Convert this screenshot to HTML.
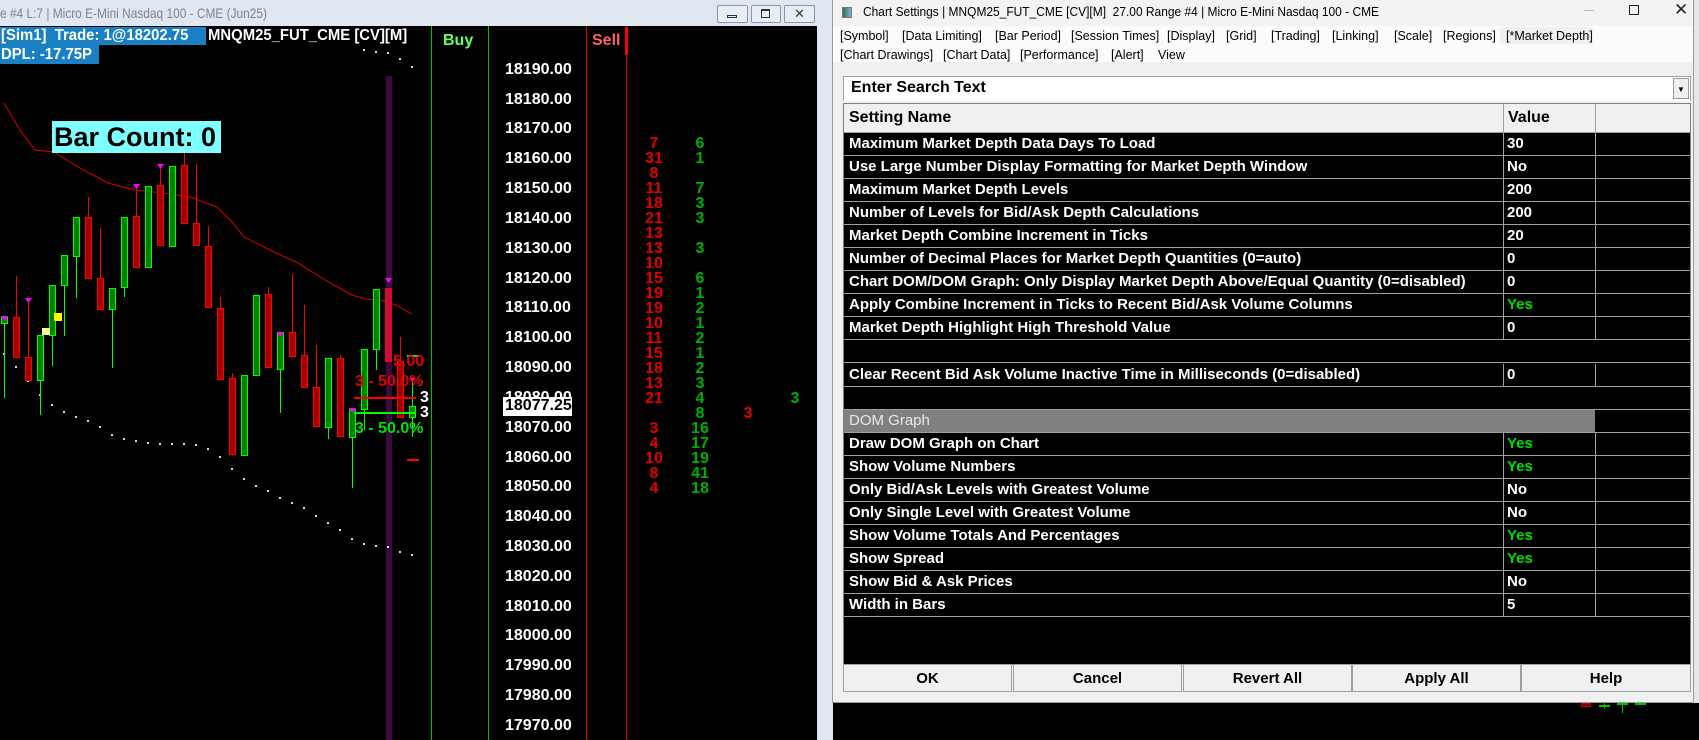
<!DOCTYPE html>
<html><head><meta charset="utf-8"><style>
*{margin:0;padding:0;box-sizing:border-box}
body{width:1699px;height:740px;overflow:hidden;background:#000;font-family:"Liberation Sans",Arial,sans-serif;position:relative}
.a{position:absolute;white-space:nowrap}
.b{font-weight:bold}
.px{position:absolute;left:505px;width:66px;text-align:left;color:#fff;font-weight:bold;font-size:16px;line-height:18px}
.r{position:absolute;color:#e00000;font-weight:bold;font-size:16px;width:30px;text-align:center;line-height:15px}
.g{position:absolute;color:#00b000;font-weight:bold;font-size:16px;width:30px;text-align:center;line-height:15px}
.tab{position:absolute;font-size:12.5px;color:#000;top:29px}
.tab2{top:48px}
.row{position:absolute;left:844px;width:846px;height:23px;border-bottom:1px solid #a0a0a0;color:#fff;font-weight:bold;font-size:15px;line-height:22px}
.row .n{position:absolute;left:5px}
.row .v{position:absolute;left:663px}
.row .c1{position:absolute;left:659px;top:0;bottom:0;border-left:1px solid #a0a0a0}
.row .c2{position:absolute;left:751px;top:0;bottom:0;border-left:1px solid #a0a0a0}
.y{color:#00e000}
.btn{position:absolute;top:664px;height:28px;width:169px;background:#f0f0f0;border:1px solid #a0a0a0;text-align:center;font-weight:bold;font-size:15px;line-height:27px;color:#000}
.hd{font-size:16px;color:#fff;line-height:18px;transform:scaleX(0.93);transform-origin:left}
</style></head><body>
<div class="a" style="left:0;top:0;width:832px;height:26px;background:#dfe8f1"></div>
<div class="a" style="left:0;top:5px;font-size:14px;color:#7a8590;transform:scaleX(0.85);transform-origin:left">e #4 L:7 | Micro E-Mini Nasdaq 100 - CME (Jun25)</div>
<div class="a" style="left:717px;top:5px;width:31px;height:18px;border:1px solid #8a96a4;border-radius:2px;background:#e8eef5"></div>
<div class="a" style="left:727px;top:15px;width:10px;height:3px;border:1px solid #333"></div>
<div class="a" style="left:751px;top:5px;width:30px;height:18px;border:1px solid #8a96a4;border-radius:2px;background:#e8eef5"></div>
<div class="a" style="left:761px;top:9px;width:9px;height:9px;border:1px solid #333;border-top-width:2px"></div>
<div class="a" style="left:784px;top:5px;width:31px;height:18px;border:1px solid #8a96a4;border-radius:2px;background:#e8eef5;text-align:center;font-size:13px;line-height:16px;color:#333">✕</div>
<div class="a" style="left:817px;top:26px;width:16px;height:714px;background:#dfe8f1"></div>

<svg class="a" style="left:0;top:26px" width="817" height="714" viewBox="0 26 817 714">
<rect x="386" y="76" width="6" height="664" fill="#3d0a40"/>
<line x1="431.5" y1="26" x2="431.5" y2="740" stroke="#00c000"/>
<line x1="488.5" y1="26" x2="488.5" y2="740" stroke="#00c000"/>
<line x1="586.5" y1="26" x2="586.5" y2="740" stroke="#e00000"/>
<line x1="626.5" y1="26" x2="626.5" y2="740" stroke="#e00000"/>
<rect x="625" y="27" width="3" height="28" fill="#ff0000"/>
<polyline fill="none" stroke="#e00000" stroke-width="1" points="4,103 20,130 35,150 54,152 80,168 108,183 135,190 163,193 190,197 217,207 232,222 244,237 270,250 298,263 325,280 352,295 365,299 380,300 396,305 412,314"/>
<g fill="#ddd">
<rect x="3" y="353" width="2" height="2"/><rect x="15" y="366" width="2" height="2"/><rect x="27" y="380" width="2" height="2"/><rect x="39" y="394" width="2" height="2"/><rect x="51" y="404" width="2" height="2"/><rect x="63" y="411" width="2" height="2"/><rect x="75" y="416" width="2" height="2"/><rect x="87" y="420" width="2" height="2"/><rect x="99" y="426" width="2" height="2"/><rect x="111" y="434" width="2" height="2"/><rect x="123" y="438" width="2" height="2"/><rect x="135" y="440" width="2" height="2"/><rect x="147" y="442" width="2" height="2"/><rect x="159" y="443" width="2" height="2"/><rect x="171" y="443" width="2" height="2"/><rect x="183" y="443" width="2" height="2"/><rect x="195" y="444" width="2" height="2"/><rect x="207" y="448" width="2" height="2"/><rect x="219" y="456" width="2" height="2"/><rect x="231" y="468" width="2" height="2"/><rect x="243" y="478" width="2" height="2"/><rect x="255" y="485" width="2" height="2"/><rect x="267" y="490" width="2" height="2"/><rect x="279" y="497" width="2" height="2"/><rect x="291" y="502" width="2" height="2"/><rect x="303" y="507" width="2" height="2"/><rect x="315" y="515" width="2" height="2"/><rect x="327" y="522" width="2" height="2"/><rect x="339" y="529" width="2" height="2"/><rect x="351" y="538" width="2" height="2"/><rect x="363" y="543" width="2" height="2"/><rect x="375" y="545" width="2" height="2"/><rect x="387" y="546" width="2" height="2"/><rect x="399" y="551" width="2" height="2"/><rect x="411" y="554" width="2" height="2"/>
<rect x="363" y="49" width="2" height="2"/><rect x="375" y="51" width="2" height="2"/><rect x="387" y="52" width="2" height="2"/><rect x="399" y="58" width="2" height="2"/><rect x="411" y="66" width="2" height="2"/>
</g>
<g stroke-width="1">
<g stroke="#00ff00" fill="#008000">
<line x1="4.5" y1="317" x2="4.5" y2="398"/><rect x="1.5" y="317.5" width="6" height="6"/>
<line x1="40.5" y1="335" x2="40.5" y2="415"/><rect x="37.5" y="335.5" width="6" height="45"/>
<line x1="52.5" y1="285" x2="52.5" y2="366"/><rect x="49.5" y="285.5" width="6" height="50"/>
<line x1="64.5" y1="255" x2="64.5" y2="336"/><rect x="61.5" y="255.5" width="6" height="30"/>
<line x1="76.5" y1="217" x2="76.5" y2="298"/><rect x="73.5" y="217.5" width="6" height="39"/>
<line x1="112.5" y1="288" x2="112.5" y2="368"/><rect x="109.5" y="288.5" width="6" height="21"/>
<line x1="124.5" y1="217" x2="124.5" y2="297"/><rect x="121.5" y="217.5" width="6" height="70"/>
<rect x="145.5" y="186.5" width="6" height="81"/>
<rect x="169.5" y="166.5" width="6" height="80"/>
<rect x="241.5" y="375.5" width="6" height="80"/>
<rect x="253.5" y="295.5" width="6" height="80"/>
<line x1="280.5" y1="332" x2="280.5" y2="413"/><rect x="277.5" y="332.5" width="6" height="37"/>
<line x1="328.5" y1="358" x2="328.5" y2="439"/><rect x="325.5" y="358.5" width="6" height="69"/>
<line x1="352.5" y1="409" x2="352.5" y2="488"/><rect x="349.5" y="409.5" width="6" height="28"/>
<line x1="364.5" y1="349" x2="364.5" y2="430"/><rect x="361.5" y="349.5" width="6" height="60"/>
<line x1="376.5" y1="289" x2="376.5" y2="370"/><rect x="373.5" y="289.5" width="6" height="60"/>
<line x1="412.5" y1="380" x2="412.5" y2="437"/><rect x="409.5" y="406.5" width="6" height="11"/>
</g>
<g stroke="#ff0000" fill="#a00000">
<line x1="16.5" y1="276" x2="16.5" y2="317"/><rect x="13.5" y="317.5" width="6" height="40"/>
<line x1="28.5" y1="298" x2="28.5" y2="357"/><rect x="25.5" y="357.5" width="6" height="23"/>
<line x1="88.5" y1="197" x2="88.5" y2="217"/><rect x="85.5" y="217.5" width="6" height="61"/>
<line x1="100.5" y1="228" x2="100.5" y2="278"/><rect x="97.5" y="278.5" width="6" height="31"/>
<line x1="136.5" y1="184" x2="136.5" y2="216"/><rect x="133.5" y="216.5" width="6" height="51"/>
<line x1="160.5" y1="164" x2="160.5" y2="185"/><rect x="157.5" y="185.5" width="6" height="60"/>
<line x1="184.5" y1="150" x2="184.5" y2="165"/><rect x="181.5" y="165.5" width="6" height="58"/>
<line x1="196.5" y1="164" x2="196.5" y2="223"/><rect x="193.5" y="223.5" width="6" height="22"/>
<line x1="208.5" y1="226" x2="208.5" y2="246"/><rect x="205.5" y="246.5" width="6" height="61"/>
<line x1="220.5" y1="297" x2="220.5" y2="308"/><rect x="217.5" y="308.5" width="6" height="71"/>
<line x1="232.5" y1="373" x2="232.5" y2="378"/><rect x="229.5" y="378.5" width="6" height="76"/>
<line x1="268.5" y1="287" x2="268.5" y2="294"/><rect x="265.5" y="294.5" width="6" height="73"/>
<line x1="292.5" y1="274" x2="292.5" y2="332"/><rect x="289.5" y="332.5" width="6" height="24"/>
<line x1="304.5" y1="305" x2="304.5" y2="355"/><rect x="301.5" y="355.5" width="6" height="32"/>
<line x1="316.5" y1="345" x2="316.5" y2="387"/><rect x="313.5" y="387.5" width="6" height="39"/>
<line x1="340.5" y1="355" x2="340.5" y2="358"/><rect x="337.5" y="358.5" width="6" height="78"/>
<line x1="400.5" y1="337" x2="400.5" y2="361"/><rect x="397.5" y="361.5" width="6" height="56"/>
<rect x="385.5" y="288.5" width="6" height="73" fill="#c0104a"/>
</g>
</g>
<rect x="42" y="328" width="8" height="7" fill="#ffff99"/>
<rect x="54" y="313" width="8" height="8" fill="#ffff00"/>
<g fill="#ff00ff">
<path d="M1,316h7l-3.5,5z"/><path d="M25,298h7l-3.5,5z"/><path d="M133,184h7l-3.5,5z"/><path d="M157,164h7l-3.5,5z"/><path d="M277,332h7l-3.5,5z"/><path d="M349,408h7l-3.5,5z"/><path d="M385,278h7l-3.5,5z"/><path d="M409,378h7l-3.5,5z"/>
</g>
<rect x="407" y="355" width="12" height="2" fill="#00ff00"/>
<rect x="354" y="397" width="62" height="2" fill="#ff0000"/>
<rect x="354" y="412" width="62" height="2" fill="#00ff00"/>
<rect x="407" y="459" width="12" height="2" fill="#ff0000"/>
</svg>
<div class="a b" style="left:393px;top:353px;font-size:16px;color:#e00000">5.00</div>
<div class="a b" style="left:355px;top:373px;font-size:16px;color:#e00000">3 - 50.0%</div>
<div class="a b" style="left:420px;top:389px;font-size:16px;color:#fff">3</div>
<div class="a b" style="left:420px;top:404px;font-size:16px;color:#fff">3</div>
<div class="a b" style="left:355px;top:420px;font-size:16px;color:#00e000">3 - 50.0%</div>

<div class="a b" style="left:0;top:27px;width:206px;height:18px;background:#1a80c4"></div>
<div class="a b" style="left:0;top:45px;width:99px;height:19px;background:#1a80c4"></div>
<div class="a b hd" style="left:1px;top:27px">[Sim1]&nbsp; Trade: 1@18202.75</div>
<div class="a b hd" style="left:208px;top:27px">MNQM25_FUT_CME [CV][M]</div>
<div class="a b hd" style="left:1px;top:46px">DPL: -17.75P</div>
<div class="a b" style="left:443px;top:32px;font-size:16px;color:#66ff66">Buy</div>
<div class="a b" style="left:592px;top:32px;font-size:16px;color:#ff6060">Sell</div>
<div class="a b" style="left:52px;top:121px;width:169px;height:32px;background:#80ffff;color:#000;font-size:27px;line-height:32px;padding-left:2px">Bar Count: 0</div>

<div class="px" style="top:61px">18190.00</div>
<div class="px" style="top:91px">18180.00</div>
<div class="px" style="top:120px">18170.00</div>
<div class="px" style="top:150px">18160.00</div>
<div class="px" style="top:180px">18150.00</div>
<div class="px" style="top:210px">18140.00</div>
<div class="px" style="top:240px">18130.00</div>
<div class="px" style="top:270px">18120.00</div>
<div class="px" style="top:299px">18110.00</div>
<div class="px" style="top:329px">18100.00</div>
<div class="px" style="top:359px">18090.00</div>
<div class="px" style="top:389px">18080.00</div>
<div class="px" style="top:419px">18070.00</div>
<div class="px" style="top:449px">18060.00</div>
<div class="px" style="top:478px">18050.00</div>
<div class="px" style="top:508px">18040.00</div>
<div class="px" style="top:538px">18030.00</div>
<div class="px" style="top:568px">18020.00</div>
<div class="px" style="top:598px">18010.00</div>
<div class="px" style="top:627px">18000.00</div>
<div class="px" style="top:657px">17990.00</div>
<div class="px" style="top:687px">17980.00</div>
<div class="px" style="top:717px">17970.00</div>
<div class="px" style="top:397px;left:503px;width:69px;height:19px;background:#fff;color:#000;padding-left:2px">18077.25</div>

<div class="r" style="left:639px;top:136px">7</div><div class="g" style="left:685px;top:136px">6</div>
<div class="r" style="left:639px;top:151px">31</div><div class="g" style="left:685px;top:151px">1</div>
<div class="r" style="left:639px;top:166px">8</div>
<div class="r" style="left:639px;top:181px">11</div><div class="g" style="left:685px;top:181px">7</div>
<div class="r" style="left:639px;top:196px">18</div><div class="g" style="left:685px;top:196px">3</div>
<div class="r" style="left:639px;top:211px">21</div><div class="g" style="left:685px;top:211px">3</div>
<div class="r" style="left:639px;top:226px">13</div>
<div class="r" style="left:639px;top:241px">13</div><div class="g" style="left:685px;top:241px">3</div>
<div class="r" style="left:639px;top:256px">10</div>
<div class="r" style="left:639px;top:271px">15</div><div class="g" style="left:685px;top:271px">6</div>
<div class="r" style="left:639px;top:286px">19</div><div class="g" style="left:685px;top:286px">1</div>
<div class="r" style="left:639px;top:301px">19</div><div class="g" style="left:685px;top:301px">2</div>
<div class="r" style="left:639px;top:316px">10</div><div class="g" style="left:685px;top:316px">1</div>
<div class="r" style="left:639px;top:331px">11</div><div class="g" style="left:685px;top:331px">2</div>
<div class="r" style="left:639px;top:346px">15</div><div class="g" style="left:685px;top:346px">1</div>
<div class="r" style="left:639px;top:361px">18</div><div class="g" style="left:685px;top:361px">2</div>
<div class="r" style="left:639px;top:376px">13</div><div class="g" style="left:685px;top:376px">3</div>
<div class="r" style="left:639px;top:391px">21</div><div class="g" style="left:685px;top:391px">4</div>
<div class="g" style="left:685px;top:406px">8</div>
<div class="r" style="left:639px;top:421px">3</div><div class="g" style="left:685px;top:421px">16</div>
<div class="r" style="left:639px;top:436px">4</div><div class="g" style="left:685px;top:436px">17</div>
<div class="r" style="left:639px;top:451px">10</div><div class="g" style="left:685px;top:451px">19</div>
<div class="r" style="left:639px;top:466px">8</div><div class="g" style="left:685px;top:466px">41</div>
<div class="r" style="left:639px;top:481px">4</div><div class="g" style="left:685px;top:481px">18</div>
<div class="g" style="left:780px;top:391px">3</div>
<div class="r" style="left:733px;top:406px">3</div>

<div class="a" style="left:832px;top:0;width:862px;height:703px;background:#f0f0f0;border:1px solid #9a9a9a;border-top:none"></div>
<div class="a" style="left:1694px;top:0;width:5px;height:703px;background:#e6e6e6"></div>
<div class="a" style="left:833px;top:0;width:860px;height:26px;background:#f3f3f3"></div>
<div class="a" style="left:833px;top:26px;width:860px;height:36px;background:#fbfbfb"></div>
<div class="a" style="left:842px;top:7px;width:10px;height:11px;background:linear-gradient(90deg,#2a7a5a,#7ab0d0);border:1px solid #777"></div>
<div class="a" style="left:863px;top:4px;font-size:13px;color:#000;transform:scaleX(0.92);transform-origin:left">Chart Settings | MNQM25_FUT_CME [CV][M]&nbsp; 27.00 Range #4 | Micro E-Mini Nasdaq 100 - CME</div>
<div class="a" style="left:1584px;top:10px;width:10px;height:1px;background:#bbb"></div>
<div class="a" style="left:1629px;top:5px;width:10px;height:10px;border:1px solid #222"></div>
<div class="a" style="left:1674px;top:0px;font-size:17px;color:#222">✕</div>
<div class="a" style="left:1500px;top:27px;width:93px;height:17px;background:#f0f0f0;border-radius:2px"></div>
<div class="tab" style="left:840px">[Symbol]</div>
<div class="tab" style="left:902px">[Data Limiting]</div>
<div class="tab" style="left:995px">[Bar Period]</div>
<div class="tab" style="left:1071px">[Session Times]</div>
<div class="tab" style="left:1167px">[Display]</div>
<div class="tab" style="left:1226px">[Grid]</div>
<div class="tab" style="left:1271px">[Trading]</div>
<div class="tab" style="left:1332px">[Linking]</div>
<div class="tab" style="left:1394px">[Scale]</div>
<div class="tab" style="left:1443px">[Regions]</div>
<div class="tab" style="left:1506px">[*Market Depth]</div>
<div class="tab tab2" style="left:840px">[Chart Drawings]</div>
<div class="tab tab2" style="left:943px">[Chart Data]</div>
<div class="tab tab2" style="left:1020px">[Performance]</div>
<div class="tab tab2" style="left:1111px">[Alert]</div>
<div class="tab tab2" style="left:1158px">View</div>

<div class="a" style="left:843px;top:76px;width:848px;height:25px;background:#fff;border:1px solid #a0a0a0;border-bottom-color:#fff"></div>
<div class="a b" style="left:851px;top:78px;font-size:16px;line-height:20px">Enter Search Text</div>
<div class="a" style="left:1673px;top:78px;width:16px;height:21px;background:#f0f0f0;border:1px solid #999;font-size:8px;text-align:center;line-height:21px">▼</div>

<div class="a" style="left:843px;top:103px;width:848px;height:562px;background:#000;border:1px solid #808080"></div>
<div class="a" style="left:844px;top:104px;width:846px;height:29px;background:#f0f0f0;border-bottom:1px solid #a0a0a0"></div>
<div class="a" style="left:1503px;top:104px;width:1px;height:29px;background:#a0a0a0"></div>
<div class="a" style="left:1595px;top:104px;width:1px;height:29px;background:#a0a0a0"></div>
<div class="a b" style="left:849px;top:109px;font-size:16px">Setting Name</div>
<div class="a b" style="left:1508px;top:109px;font-size:16px">Value</div>

<div class="row" style="top:133px"><span class="n">Maximum Market Depth Data Days To Load</span><span class="c1"></span><span class="v">30</span><span class="c2"></span></div>
<div class="row" style="top:156px"><span class="n">Use Large Number Display Formatting for Market Depth Window</span><span class="c1"></span><span class="v">No</span><span class="c2"></span></div>
<div class="row" style="top:179px"><span class="n">Maximum Market Depth Levels</span><span class="c1"></span><span class="v">200</span><span class="c2"></span></div>
<div class="row" style="top:202px"><span class="n">Number of Levels for Bid/Ask Depth Calculations</span><span class="c1"></span><span class="v">200</span><span class="c2"></span></div>
<div class="row" style="top:225px"><span class="n">Market Depth Combine Increment in Ticks</span><span class="c1"></span><span class="v">20</span><span class="c2"></span></div>
<div class="row" style="top:248px"><span class="n">Number of Decimal Places for Market Depth Quantities (0=auto)</span><span class="c1"></span><span class="v">0</span><span class="c2"></span></div>
<div class="row" style="top:271px"><span class="n">Chart DOM/DOM Graph: Only Display Market Depth Above/Equal Quantity (0=disabled)</span><span class="c1"></span><span class="v">0</span><span class="c2"></span></div>
<div class="row" style="top:294px"><span class="n">Apply Combine Increment in Ticks to Recent Bid/Ask Volume Columns</span><span class="c1"></span><span class="v y">Yes</span><span class="c2"></span></div>
<div class="row" style="top:317px"><span class="n">Market Depth Highlight High Threshold Value</span><span class="c1"></span><span class="v">0</span><span class="c2"></span></div>
<div class="row" style="top:340px"></div>
<div class="row" style="top:364px"><span class="n">Clear Recent Bid Ask Volume Inactive Time in Milliseconds (0=disabled)</span><span class="c1"></span><span class="v">0</span><span class="c2"></span></div>
<div class="row" style="top:387px"></div>
<div class="row" style="top:410px"><span style="position:absolute;left:0;top:0;width:751px;height:22px;background:#808080"></span><span class="n" style="color:#e8e8e8;font-weight:normal">DOM Graph</span></div>
<div class="row" style="top:433px"><span class="n">Draw DOM Graph on Chart</span><span class="c1"></span><span class="v y">Yes</span><span class="c2"></span></div>
<div class="row" style="top:456px"><span class="n">Show Volume Numbers</span><span class="c1"></span><span class="v y">Yes</span><span class="c2"></span></div>
<div class="row" style="top:479px"><span class="n">Only Bid/Ask Levels with Greatest Volume</span><span class="c1"></span><span class="v">No</span><span class="c2"></span></div>
<div class="row" style="top:502px"><span class="n">Only Single Level with Greatest Volume</span><span class="c1"></span><span class="v">No</span><span class="c2"></span></div>
<div class="row" style="top:525px"><span class="n">Show Volume Totals And Percentages</span><span class="c1"></span><span class="v y">Yes</span><span class="c2"></span></div>
<div class="row" style="top:548px"><span class="n">Show Spread</span><span class="c1"></span><span class="v y">Yes</span><span class="c2"></span></div>
<div class="row" style="top:571px"><span class="n">Show Bid &amp; Ask Prices</span><span class="c1"></span><span class="v">No</span><span class="c2"></span></div>
<div class="row" style="top:594px"><span class="n">Width in Bars</span><span class="c1"></span><span class="v">5</span><span class="c2"></span></div>

<div class="btn" style="left:843px">OK</div>
<div class="btn" style="left:1013px">Cancel</div>
<div class="btn" style="left:1183px">Revert All</div>
<div class="btn" style="left:1352px">Apply All</div>
<div class="btn" style="left:1521px;width:170px">Help</div>

<div class="a" style="left:1581px;top:703px;width:10px;height:4px;border:1px solid #c00000;background:#800000"></div>
<div class="a" style="left:1599px;top:705px;width:11px;height:2px;background:#00c000"></div>
<div class="a" style="left:1604px;top:702px;width:1px;height:7px;background:#00c000"></div>
<div class="a" style="left:1617px;top:703px;width:11px;height:2px;background:#00c000"></div>
<div class="a" style="left:1622px;top:703px;width:1px;height:10px;background:#00c000"></div>
<div class="a" style="left:1635px;top:703px;width:11px;height:2px;background:#00c000"></div>
</body></html>
